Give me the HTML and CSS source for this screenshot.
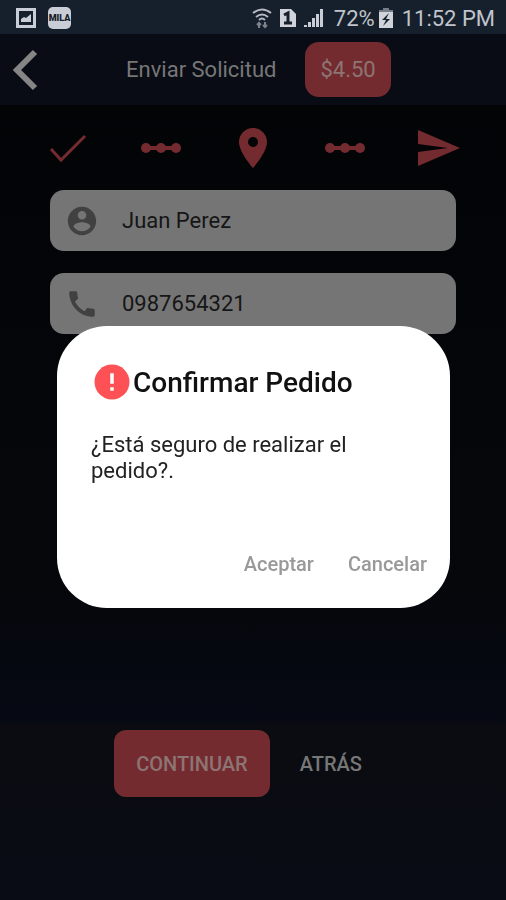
FILE: index.html
```html
<!DOCTYPE html>
<html lang="es">
<head>
    <meta charset="UTF-8">
    <meta name="viewport" content="width=device-width, initial-scale=1">
    <title>Enviar Solicitud</title>
    <link rel="stylesheet" href="styles.css">
</head>
<body>
    <div class="statusbar">
        <svg width="20" height="22" viewBox="0 0 20 22">
            <path fill="#c9cdd6" fill-rule="evenodd" d="M0 1h20v20H0zM3 4v14h14V4z"/>
            <path fill="#c9cdd6" d="M5 15v-3l3-2 2 1 5-4v8z"/>
        </svg>
        <span class="app-logo">MILA</span>

        <div class="status-right">
            <svg width="20" height="22" viewBox="0 0 20 22" fill="none" stroke="#b4b8c0" stroke-width="2">
                <path d="M1 6q9-7 18 0M4 10q6-5 12 0M7 13q3-3 6 0"/>
                <path stroke="#7d838c" d="M7 21v-6M5 18l2-2 2 2M13 15v6M11 18l2 2 2-2"/>
            </svg>
            <svg width="16" height="20" viewBox="0 0 16 20">
                <path fill="#d0d3d9" d="M0 1h11l5 5v13H0z"/>
                <path fill="none" stroke="#16202c" stroke-width="3" d="M4 7l4-2v10M4 15h8"/>
            </svg>
            <svg class="signal" width="20" height="20" viewBox="0 0 20 20" fill="#c9cdd6">
                <path d="M0 17h3v2H0zM4 14h3v5H4zM8 10h3v9H8zM12 6h3v13h-3zM16 1h3v18h-3z"/>
            </svg>
            <span>72%</span>
            <svg class="battery" width="14" height="22" viewBox="0 0 14 22">
                <path fill="#777d86" d="M4 1h6v2h4v4H0V3h4z"/>
                <path fill="#d0d3d9" d="M0 5h14v16H0z"/>
                <path fill="#16202c" d="M10 6l-7 7h4l-3 6 7-7H7z"/>
            </svg>
            <span>11:52 PM</span>
        </div>
    </div>

    <header class="appbar">
        <button class="back" aria-label="Volver">
            <svg width="26" height="42" viewBox="0 0 26 42">
                <path fill="none" stroke="#858585" stroke-width="6" d="M23 3L5 21l18 18"/>
            </svg>
        </button>
        <h1>Enviar Solicitud</h1>
        <span class="price">$4.50</span>
    </header>

    <main>
        <div class="steps">
            <svg width="42" height="42" viewBox="0 0 42 42">
                <path fill="none" stroke="#742b30" stroke-width="3" d="M4 22l10 11L38 9"/>
            </svg>
            <svg width="42" height="42" viewBox="0 0 42 42" fill="#742b30">
                <path d="M6 19h30v4H6z"/>
                <circle cx="6" cy="21" r="5"/><circle cx="21" cy="21" r="5"/><circle cx="36" cy="21" r="5"/>
            </svg>
            <svg width="48" height="48" viewBox="0 0 24 24" fill="#742b30">
                <path d="M12 2C8.130 2 5 5.130 5 9c0 5.250 7 13 7 13s7-7.750 7-13c0-3.870-3.130-7-7-7zm0 9.500a2.500 2.500 0 0 1 0-5 2.500 2.500 0 0 1 0 5z"/>
            </svg>
            <svg width="42" height="42" viewBox="0 0 42 42" fill="#742b30">
                <path d="M6 19h30v4H6z"/>
                <circle cx="6" cy="21" r="5"/><circle cx="21" cy="21" r="5"/><circle cx="36" cy="21" r="5"/>
            </svg>
            <svg width="48" height="48" viewBox="0 0 24 24" fill="#742b30">
                <path d="M2.010 21L23 12 2.010 3 2 10l15 2-15 2z"/>
            </svg>
        </div>

        <form class="fields">
            <label class="field">
                <svg width="34" height="34" viewBox="0 0 24 24" fill="#414141">
                    <path d="M12 2C6.480 2 2 6.480 2 12s4.480 10 10 10 10-4.480 10-10S17.520 2 12 2zm0 3c1.660 0 3 1.340 3 3s-1.340 3-3 3-3-1.340-3-3 1.340-3 3-3zm0 14.200c-2.500 0-4.710-1.280-6-3.220.030-1.990 4-3.080 6-3.080 1.990 0 5.970 1.090 6 3.080-1.290 1.940-3.500 3.220-6 3.220z"/>
                </svg>
                <input type="text" value="Juan Perez" aria-label="Nombre">
            </label>
            <label class="field">
                <svg width="34" height="34" viewBox="0 0 24 24" fill="#414141">
                    <path d="M20.010 15.380c-1.230 0-2.420-.2-3.530-.560-.350-.120-.740-.030-1.010.240l-1.570 1.970c-2.830-1.350-5.480-3.900-6.890-6.830l1.950-1.660c.270-.280.350-.670.240-1.020-.370-1.110-.560-2.300-.560-3.530 0-.540-.450-.990-.990-.990H4.190C3.650 3 3 3.240 3 3.990 3 13.280 10.730 21 20.010 21c.710 0 .990-.630.990-1.180v-3.450c0-.540-.450-.990-.990-.990z"/>
                </svg>
                <input type="tel" value="0987654321" aria-label="Teléfono">
            </label>
        </form>

        <div class="actions">
            <button class="btn btn-primary">CONTINUAR</button>
            <button class="btn">ATRÁS</button>
        </div>
    </main>

    <div class="overlay">
        <div class="dialog" role="dialog" aria-labelledby="dialog-title">
            <div class="dialog-title">
                <svg width="42" height="42" viewBox="0 0 24 24">
                    <circle cx="12" cy="12" r="10" fill="#fd5155"/>
                    <path fill="#fff" d="M11 7h2v6h-2zM11 15h2v2h-2z"/>
                </svg>
                <h2 id="dialog-title">Confirmar Pedido</h2>
            </div>
            <p>¿Está seguro de realizar el pedido?.</p>
            <div class="dialog-actions">
                <button>Aceptar</button>
                <button>Cancelar</button>
            </div>
        </div>
    </div>
</body>
</html>
```

FILE: styles.css
```css
* {
    box-sizing: border-box;
}

body {
    margin: 0;
    min-height: 100vh;
    display: flex;
    flex-direction: column;
    font-family: Roboto, sans-serif;
    font-size: 22px;
    color: #777;
    background-color: #030406;
}

button {
    font-family: inherit;
    border: none;
    background: none;
    color: inherit;
    cursor: pointer;
}

svg {
    display: block;
    flex-shrink: 0;
}

/* Status bar */
.statusbar {
    display: flex;
    align-items: center;
    height: 34px;
    padding: 2px 11px 0 16px;
    background-color: #16202c;
    color: #c0c4cc;
}

.app-logo {
    margin-left: 12px;
    width: 23px;
    height: 22px;
    border-radius: 5px;
    background-color: #c9cdd6;
    color: #16202c;
    font-size: 9px;
    font-weight: 900;
    line-height: 22px;
    text-align: center;
}

.status-right {
    display: flex;
    align-items: center;
    margin-left: auto;
    white-space: nowrap;
}

.status-right svg {
    margin-right: 8px;
}

.status-right .signal {
    margin-right: 10px;
}

.status-right .battery {
    margin: 0 9px 0 4px;
}

/* App bar */
.appbar {
    display: flex;
    align-items: center;
    height: 71px;
    padding: 0 12px;
    background-color: #090c14;
}

.back {
    padding: 0;
}

.appbar h1 {
    margin: 0 29px 0 88px;
    font-size: 22px;
    font-weight: 400;
    white-space: nowrap;
}

.price {
    padding: 14px 15px;
    border-radius: 14px;
    background-color: #742b30;
    color: #8d7573;
    line-height: 27px;
}

/* Content */
main {
    flex: 1;
    display: flex;
    flex-direction: column;
    background: linear-gradient(#030406, #05070b 60%, #060913 77%, #0a0c11 78%, #090c14);
}

.steps {
    display: grid;
    grid-template-columns: repeat(5, 1fr);
    place-items: center;
    height: 85px;
    padding: 0 22px;
}

.fields {
    display: flex;
    flex-direction: column;
    gap: 22px;
    padding: 0 50px;
}

.field {
    display: flex;
    align-items: center;
    gap: 23px;
    height: 61px;
    padding: 0 15px;
    border-radius: 14px;
    background-color: #757575;
}

.field input {
    flex: 1;
    min-width: 0;
    padding: 0;
    border: none;
    outline: none;
    background: none;
    font: inherit;
    color: #161616;
}

.actions {
    display: flex;
    justify-content: center;
    gap: 8px;
    margin-top: auto;
    padding: 0 8px 103px 0;
}

.btn {
    height: 67px;
    padding: 0 22px;
    border-radius: 12px;
    font-size: 20px;
    font-weight: 500;
}

.btn-primary {
    background-color: #742b30;
    color: #8d7573;
}

/* Confirmation dialog */
.overlay {
    position: fixed;
    inset: 34px 0 0;
    display: flex;
    align-items: center;
    justify-content: center;
    padding: 0 56px 0 57px;
}

.dialog {
    width: 100%;
    max-width: 480px;
    padding: 35px 12px 9px 34px;
    border-radius: 50px;
    background-color: #fff;
    color: #222;
}

.dialog-title {
    display: flex;
    align-items: center;
}

.dialog-title h2 {
    margin: 0;
    font-size: 28px;
    font-weight: 500;
    color: #111;
}

.dialog p {
    margin: 29px 22px 45px 0;
    line-height: 26px;
}

.dialog-actions {
    display: flex;
    justify-content: flex-end;
    gap: 12px;
    color: #999;
}

.dialog-actions button {
    height: 70px;
    padding: 0 11px;
    font-size: 20px;
    font-weight: 500;
}
```
